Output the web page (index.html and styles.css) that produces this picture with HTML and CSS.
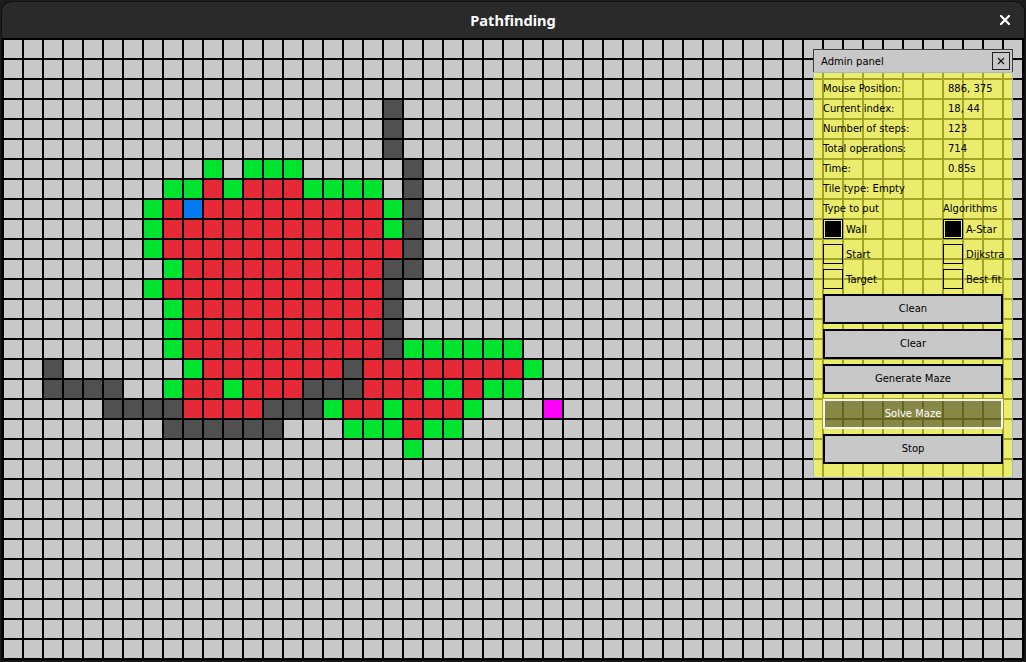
FILE: index.html
```html
<!DOCTYPE html>
<html lang="en">
<head>
<meta charset="utf-8">
<title>Pathfinding</title>
<link rel="stylesheet" href="styles.css">
</head>
<body>
<div class="window">
  <header class="titlebar">
    <span class="title">Pathfinding</span>
    <span class="win-close" aria-label="Close">
      <svg width="10" height="10" viewBox="0 0 10 10"><path d="M1 1 L9 9 M9 1 L1 9" stroke="#ffffff" stroke-width="2.2" stroke-linecap="square"/></svg>
    </span>
  </header>
  <div class="grid" id="grid"></div>
  <section class="panel">
    <div class="panel-head">
      <span>Admin panel</span>
      <span class="panel-x"><svg width="8" height="8" viewBox="0 0 8 8"><path d="M1 1 L7 7 M7 1 L1 7" stroke="#111" stroke-width="1.1"/></svg></span>
    </div>
    <div class="panel-body">
      <div class="stat"><span class="k">Mouse Position:</span><span class="v">886, 375</span></div>
      <div class="stat"><span class="k">Current index:</span><span class="v">18, 44</span></div>
      <div class="stat"><span class="k">Number of steps:</span><span class="v">123</span></div>
      <div class="stat"><span class="k">Total operations:</span><span class="v">714</span></div>
      <div class="stat"><span class="k">Time:</span><span class="v">0.85s</span></div>
      <div class="stat"><span class="k">Tile type: Empty</span></div>
      <div class="stat"><span class="k short">Type to put</span><span class="v">Algorithms</span></div>
      <div class="choices">
        <div class="col">
          <div class="opt"><span class="box on"></span>Wall</div>
          <div class="opt"><span class="box"></span>Start</div>
          <div class="opt"><span class="box"></span>Target</div>
        </div>
        <div class="col">
          <div class="opt"><span class="box on"></span>A-Star</div>
          <div class="opt"><span class="box"></span>Dijkstra</div>
          <div class="opt"><span class="box"></span>Best fit</div>
        </div>
      </div>
      <div class="buttons">
        <div class="btn">Clean</div>
        <div class="btn">Clear</div>
        <div class="btn">Generate Maze</div>
        <div class="btn active">Solve Maze</div>
        <div class="btn">Stop</div>
      </div>
    </div>
  </section>
</div>
<script src="script.js"></script>
</body>
</html>
```

FILE: styles.css
```css
html, body {
  margin: 0;
  padding: 0;
}
body {
  width: 1026px;
  height: 662px;
  overflow: hidden;
  background: #1c1c1c;
  font-family: "DejaVu Sans", "Liberation Sans", sans-serif;
}
.window {
  position: relative;
  margin: 1px;
  border: 1px solid #111;
  border-radius: 10px 10px 0 0;
  overflow: hidden;
  background: #000;
}
.titlebar {
  height: 36px;
  background: #2a2a2a;
  display: grid;
  grid-template-columns: 1fr auto 1fr;
  align-items: center;
}
.title {
  grid-column: 2;
  color: #ffffff;
  font-family: "Noto Sans", "Open Sans", sans-serif;
  font-weight: 700;
  font-size: 14.6px;
}
.win-close {
  grid-column: 3;
  justify-self: end;
  margin-right: 14px;
  width: 10px;
  height: 10px;
  display: block;
}
.win-close svg { display: block; }

.grid {
  display: grid;
  grid-template-columns: repeat(51, 18px);
  grid-auto-rows: 18px;
  gap: 2px;
  padding: 2px;
  background: #000;
}
.cell { background: #c8c8c8; }
.cell.w { background: #505050; }
.cell.r { background: #e62937; }
.cell.g { background: #00e430; }
.cell.b { background: #0079f1; }
.cell.m { background: #ff00ff; }

.panel {
  position: absolute;
  left: 811px;
  top: 47px;
  width: 200px;
  font-size: 10px;
  color: #000;
}
.panel-head {
  box-sizing: border-box;
  height: 23px;
  background: #c8c8c8;
  border: 1px solid #3a3a3a;
  border-bottom: none;
  display: flex;
  align-items: center;
  justify-content: space-between;
  padding: 0 2px 0 7px;
}
.panel-x {
  box-sizing: border-box;
  width: 18px;
  height: 18px;
  border: 1px solid #222;
  display: grid;
  place-items: center;
}
.panel-x svg { display: block; }
.panel-body {
  box-sizing: border-box;
  height: 406px;
  border: 1px solid #9dbccb;
  background: rgba(255, 255, 60, 0.64);
  padding: 5px 9px 0;
}
.stat {
  display: flex;
  align-items: center;
  height: 20px;
}
.k { width: 125px; flex: none; }
.k.short { width: 120px; }
.choices {
  display: grid;
  grid-template-columns: 120px 1fr;
  margin-top: 1px;
}
.col {
  display: flex;
  flex-direction: column;
}
.opt {
  display: flex;
  align-items: center;
  gap: 3px;
  height: 20px;
  margin-bottom: 5px;
}
.box {
  box-sizing: border-box;
  width: 20px;
  height: 20px;
  border: 1px solid #000;
  padding: 1px;
  flex: none;
}
.box.on::after {
  content: "";
  display: block;
  width: 16px;
  height: 16px;
  background: #000;
}
.buttons {
  display: flex;
  flex-direction: column;
  gap: 5px;
}
.btn {
  box-sizing: border-box;
  height: 30px;
  border: 2px solid #000;
  background: #c8c8c8;
  display: grid;
  place-items: center;
  padding-bottom: 1px;
}
.btn.active {
  border-color: #f4f4f4;
  background: rgba(35, 35, 30, 0.5);
  color: #ffffff;
}
```

FILE: script.js
```js
(function () {
  var COLS = 51, ROWS = 31;
  var map = [];
  for (var j = 0; j < ROWS; j++) {
    var row = [];
    for (var i = 0; i < COLS; i++) row.push('.');
    map.push(row);
  }
  function rep(c, n) { return new Array(n + 1).join(c); }
  var spec = [
    [3, 19, "W"], [4, 19, "W"], [5, 19, "W"],
    [6, 10, "G.GGG.....W"],
    [7, 8, "GGRGRRRGGGG.W"],
    [8, 7, "GRB" + rep("R", 9) + "GW"],
    [9, 7, "G" + rep("R", 11) + "GW"],
    [10, 7, "G" + rep("R", 12) + "W"],
    [11, 8, "G" + rep("R", 10) + "WW"],
    [12, 7, "G" + rep("R", 11) + "W"],
    [13, 8, "G" + rep("R", 10) + "W"],
    [14, 8, "G" + rep("R", 10) + "W"],
    [15, 8, "G" + rep("R", 10) + "W" + "GGGGGG"],
    [16, 2, "W"],
    [16, 9, "G" + rep("R", 7) + "W" + rep("R", 8) + "G"],
    [17, 2, "WWWW"],
    [17, 8, "GRRGRRRWWWRRRGGRGG"],
    [18, 5, "WWWWRRRRWWWGRRGRRRG...M"],
    [19, 8, "WWWWWW...GGGRGG"],
    [20, 20, "G"]
  ];
  spec.forEach(function (s) {
    var str = s[2];
    for (var k = 0; k < str.length; k++) map[s[0]][s[1] + k] = str[k];
  });
  var cls = { '.': '', 'W': ' w', 'R': ' r', 'G': ' g', 'B': ' b', 'M': ' m' };
  var grid = document.getElementById('grid');
  var frag = document.createDocumentFragment();
  for (var y = 0; y < ROWS; y++) {
    for (var x = 0; x < COLS; x++) {
      var d = document.createElement('div');
      d.className = 'cell' + cls[map[y][x]];
      frag.appendChild(d);
    }
  }
  grid.appendChild(frag);
})();
```
